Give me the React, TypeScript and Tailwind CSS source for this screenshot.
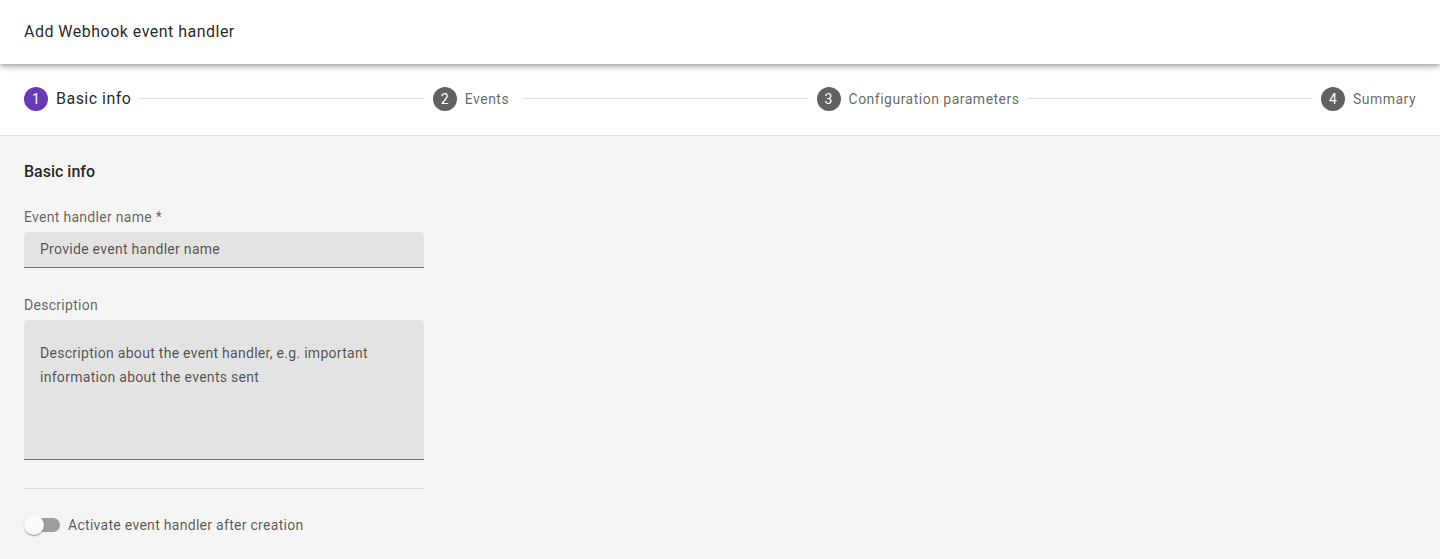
import React from 'react';

const steps = [
  { n: 1, label: 'Basic info', active: true, gap: 'ml-[9px]' },
  { n: 2, label: 'Events', gap: 'ml-[15px]' },
  { n: 3, label: 'Configuration parameters', gap: 'ml-[9px]' },
  { n: 4, label: 'Summary', gap: '' },
];

export default function App() {
  return (
    <div className="min-h-screen bg-[#f5f5f5] font-['Roboto',sans-serif] text-[rgba(0,0,0,0.87)]">
      {/* Top bar */}
      <header className="relative z-10 h-16 bg-white flex items-center px-6 shadow-[0_2px_4px_-1px_rgba(0,0,0,0.2),0_4px_5px_0_rgba(0,0,0,0.14),0_1px_10px_0_rgba(0,0,0,0.12)]">
        <h1 className="text-base font-normal tracking-[0.03em]">Add Webhook event handler</h1>
      </header>

      {/* Stepper */}
      <nav className="h-[72px] bg-white border-b border-[#e0e0e0] flex items-center px-6 pb-[2px]">
        {steps.map((s, i) => (
          <React.Fragment key={s.n}>
            <div className="flex items-center gap-2 shrink-0">
              <span
                className={
                  'w-6 h-6 rounded-full flex items-center justify-center text-white text-sm ' +
                  (s.active ? 'bg-[#673ab7]' : 'bg-[#616161]')
                }
              >
                {s.n}
              </span>
              <span
                className={
                  s.active
                    ? 'text-base text-[rgba(0,0,0,0.87)] tracking-[0.03em]'
                    : 'text-sm text-[rgba(0,0,0,0.62)] tracking-[0.035em]'
                }
              >
                {s.label}
              </span>
            </div>
            {i < steps.length - 1 && <div className={'flex-1 h-px bg-[#e0e0e0] mr-2 ' + s.gap} />}
          </React.Fragment>
        ))}
      </nav>

      {/* Form */}
      <main className="px-6 pt-6 tracking-[0.018em]">
        <h2 className="text-base font-medium leading-6 tracking-normal">Basic info</h2>

        <div className="w-[400px] mt-[23px]">
          <label className="block text-sm leading-5 text-[rgba(0,0,0,0.62)]">Event handler name *</label>
          <div className="mt-[5px] h-9 bg-[#e3e3e3] rounded-t border-b border-[#757575] flex items-center px-4">
            <span className="text-sm text-[rgba(0,0,0,0.66)] -mt-[2px]">Provide event handler name</span>
          </div>

          <label className="block mt-[27px] text-sm leading-5 text-[rgba(0,0,0,0.62)]">Description</label>
          <div className="mt-[5px] h-[140px] bg-[#e3e3e3] rounded-t border-b border-[#757575] px-4 pt-[21px]">
            <p className="text-sm leading-6 text-[rgba(0,0,0,0.66)]">
              Description about the event handler, e.g. important information about the events sent
            </p>
          </div>

          <div className="mt-7 h-px bg-[#dcdcdc]" />

          <div className="mt-[26px] flex items-center gap-2">
            <div className="relative w-9 h-5 flex items-center">
              <div className="ml-[3px] w-[33px] h-[14px] rounded-full bg-[#9e9e9e]" />
              <div className="absolute left-0 top-0 w-5 h-5 rounded-full bg-[#fafafa] shadow-[0_2px_1px_-1px_rgba(0,0,0,0.2),0_1px_1px_0_rgba(0,0,0,0.14),0_1px_3px_0_rgba(0,0,0,0.12)]" />
            </div>
            <span className="text-sm text-[rgba(0,0,0,0.66)]">Activate event handler after creation</span>
          </div>
        </div>
      </main>
    </div>
  );
}
